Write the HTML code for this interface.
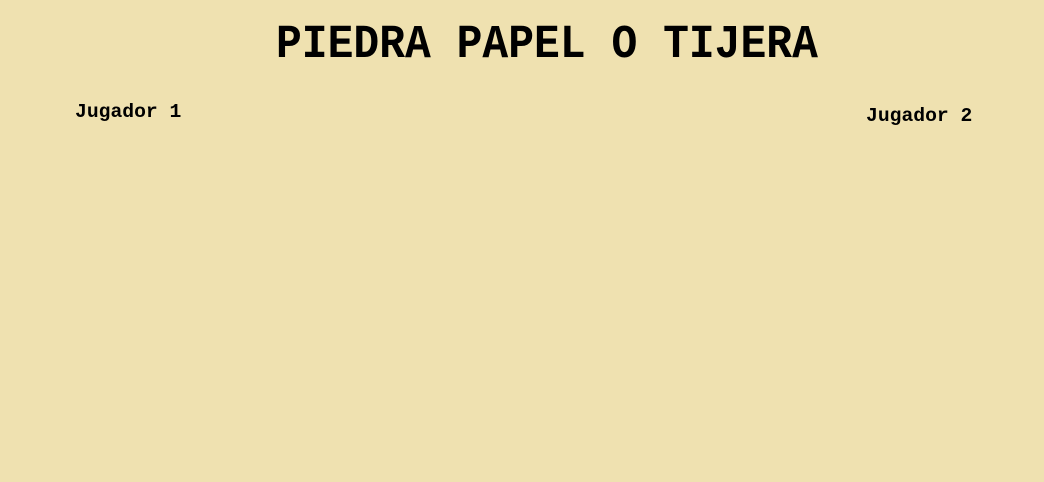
<!DOCTYPE html>
<html><head><meta charset="utf-8"><style>
html,body{margin:0;padding:0;width:1044px;height:482px;background:#efe1b0;overflow:hidden;font-family:"Liberation Mono",monospace;font-weight:bold;color:#000}
.t{position:absolute;left:276px;top:20px;font-size:43px;line-height:50px;white-space:nowrap;transform:scaleY(1.1);transform-origin:0 50%}
.j1{position:absolute;left:75px;top:100px;font-size:19.7px;line-height:24px}
.j2{position:absolute;left:866px;top:104px;font-size:19.7px;line-height:24px}
</style></head><body>
<div class="t">PIEDRA PAPEL O TIJERA</div>
<div class="j1">Jugador 1</div>
<div class="j2">Jugador 2</div>
</body></html>
